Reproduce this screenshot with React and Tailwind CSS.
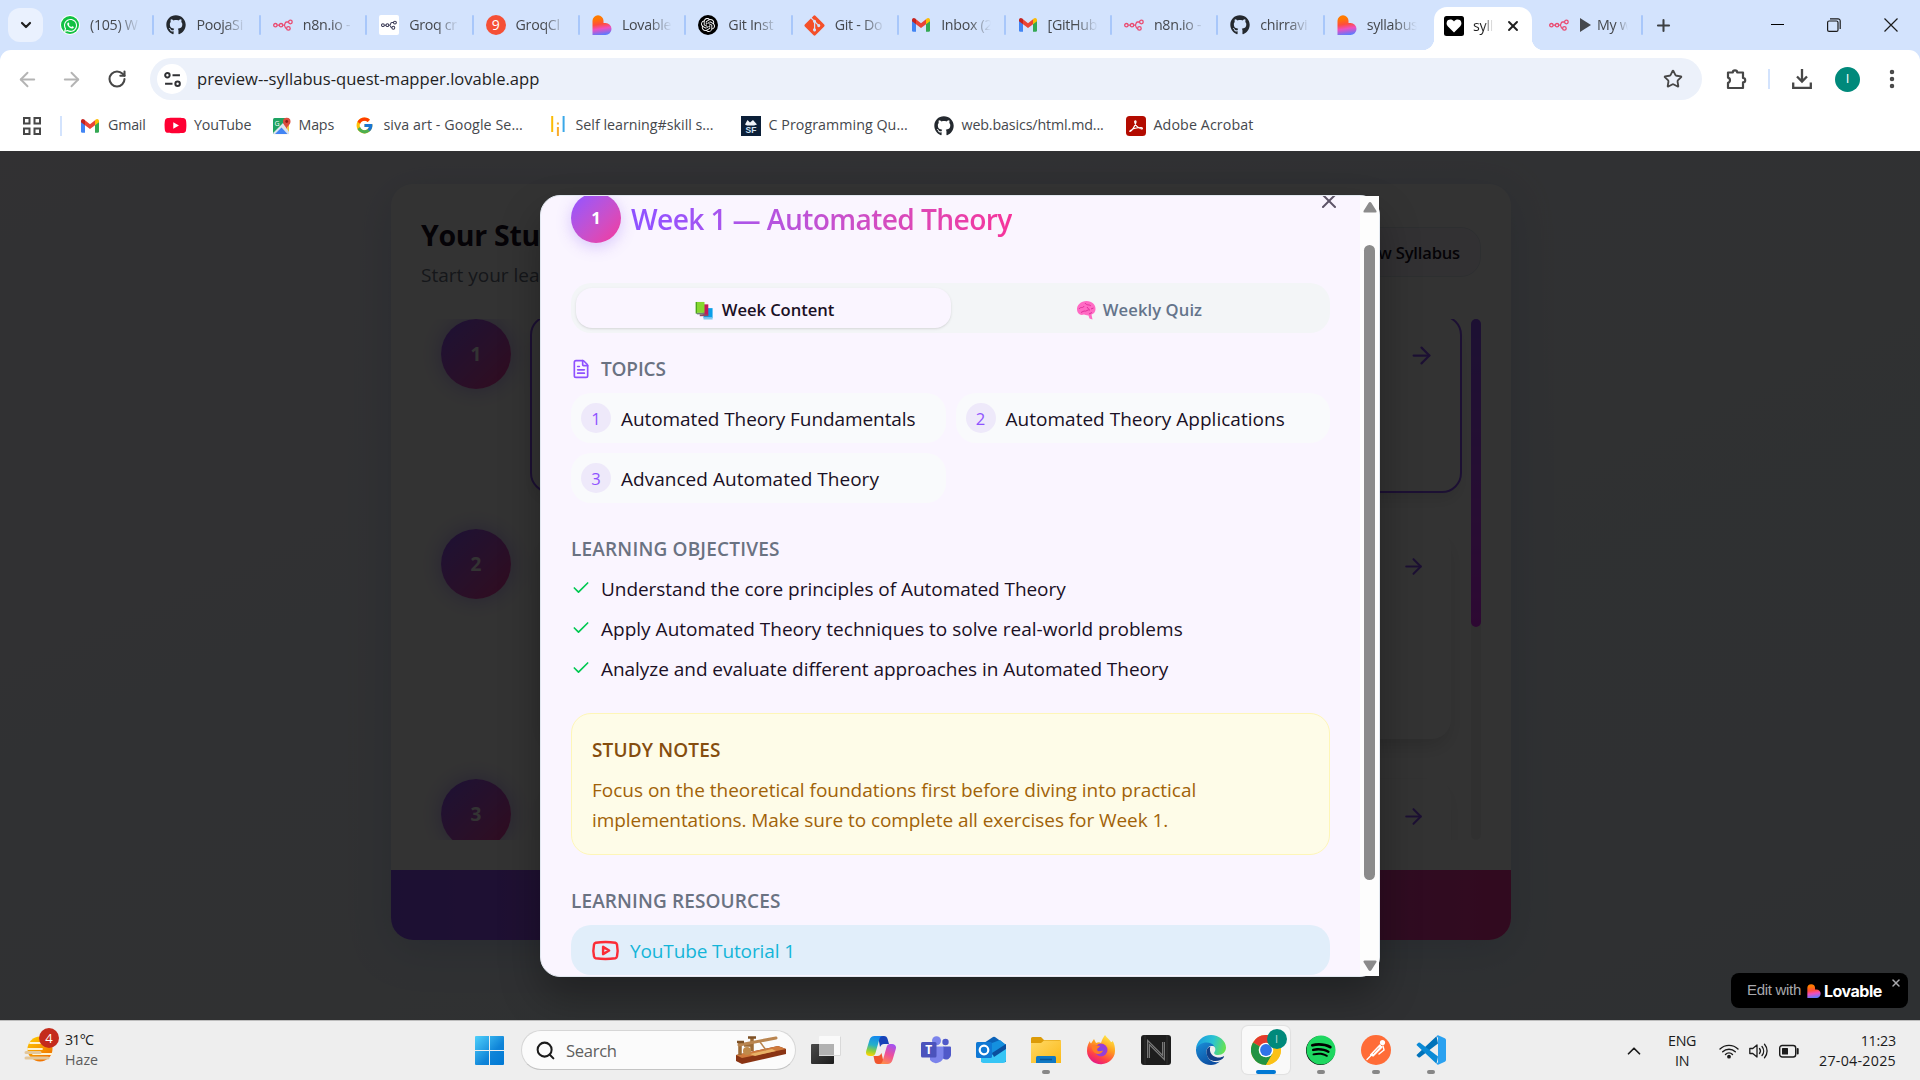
import {
  ArrowRight, ArrowLeft, Check, ChevronDown, ChevronUp, EllipsisVertical, FileText, Plus, RotateCw, Search, Star, X, Youtube,
} from "lucide-react";
import { FaGithub, FaWhatsapp, FaSpotify, FaGitAlt, FaYoutube } from "react-icons/fa";
import { FcGoogle } from "react-icons/fc";
import { SiOpenai } from "react-icons/si";

/* ---------- favicons ---------- */

const WhatsApp = () => (
  <span className="flex size-5 items-center justify-center rounded-full bg-white">
    <span className="flex size-[18px] items-center justify-center rounded-full bg-[#12c143]">
      <FaWhatsapp className="size-[15px] text-white" />
    </span>
  </span>
);

const N8n = ({ className = "size-5 text-[#ea4b71]" }) => (
  <svg viewBox="0 0 20 20" className={className} fill="none" stroke="currentColor" strokeWidth="1.3">
    <circle cx="2.4" cy="10.2" r="1.7" />
    <circle cx="8" cy="10.2" r="1.7" />
    <circle cx="17.4" cy="7" r="1.8" />
    <circle cx="15.4" cy="13.4" r="1.8" />
    <path d="M4.1 10.2h2.2M9.7 10.2h.8M15.6 7h-2c-2.6 0-.6 3.2-3 3.2 2.4 0 .4 3.2 3 3.2" />
  </svg>
);

const N8nDark = () => (
  <span className="flex size-5 items-center justify-center rounded-[2px] bg-white">
    <N8n className="size-4 text-[#3a3a55]" />
  </span>
);

const Nine = () => (
  <span className="flex size-5 items-center justify-center rounded-full bg-[#f55036] text-[14px] leading-none text-white">9</span>
);

const LovableMark = ({ size = "size-5" }) => (
  <svg viewBox="0 0 20 20" className={size}>
    <defs>
      <linearGradient id="lovable" x1="0.35" y1="0" x2="0.5" y2="1">
        <stop offset="0.15" stopColor="#ff7a00" />
        <stop offset="0.45" stopColor="#ff4d3d" />
        <stop offset="0.68" stopColor="#ee4fc0" />
        <stop offset="1" stopColor="#5a7bff" />
      </linearGradient>
    </defs>
    <path fill="url(#lovable)" d="M.5 5.8A5.500 5.500 0 0 1 11.500 5.800V8h2A6 6 0 0 1 13.500 20H.500Z" />
  </svg>
);

const OpenAi = () => (
  <span className="flex size-5 items-center justify-center rounded-full bg-black">
    <SiOpenai className="size-[14px] text-white" />
  </span>
);

const GmailMark = () => (
  <svg viewBox="0 0 20 20" className="size-5">
    <path fill="#4285f4" d="M1 5.500v10c0 .8.500 1.200 1.200 1.200H5V8.500z" />
    <path fill="#34a853" d="M19 5.500v10c0 .8-.500 1.200-1.200 1.200H15V8.500z" />
    <path fill="#ea4335" d="M5 4.300l5 3.900 5-3.900v5L10 13 5 9.300z" />
    <path fill="#c5221f" d="M1 5c0-1.900 2-2.600 3.300-1.400L5 4.200v5L1 6.200z" />
    <path fill="#fbbc04" d="M19 5c0-1.900-2-2.600-3.300-1.400l-.7.6v5l4-3z" />
  </svg>
);

const HeartMark = () => (
  <svg viewBox="0 0 20 20" className="size-5">
    <rect width="20" height="20" rx="2.500" fill="#000" />
    <path fill="#fff" d="M10 16.500 3.500 10A4 4 0 0 1 2.800 6C3.800 3 8 2.800 10 5.500 12 2.800 16.200 3 17.200 6a4 4 0 0 1-.7 4z" />
  </svg>
);

const MapsMark = () => (
  <svg viewBox="0 0 20 20" className="size-5">
    <rect x="1" y="2" width="16" height="16" rx="1.500" fill="#1ea362" />
    <path d="M1 17 11 7l6 6v4.500a.8.8 0 0 1-.8.800H2z" fill="#dde4ec" />
    <path d="M3 18 9.500 11.500 15.500 18z" fill="#4285f4" />
    <path d="M12 8l5 8V8z" fill="#f6c543" />
    <text x="2.500" y="9.500" fontSize="7" fill="#fff" fontFamily="Open Sans">G</text>
    <path d="M14.500 13c-.5-3-3.500-4-3.500-7.500a3.700 3.700 0 0 1 7.500 0C18.500 9 15 10 14.500 13z" fill="#dd4b3e" />
    <circle cx="14.700" cy="5.500" r="1.400" fill="#8c1d18" />
  </svg>
);

const BarsMark = () => (
  <svg viewBox="0 0 14 20" className="h-5 w-3.5">
    <path d="M1.200 0v16" stroke="#fbbc05" strokeWidth="2" />
    <path d="M6.900 11v9M6.900 6.500v2" stroke="#f9ab2d" strokeWidth="2" />
    <path d="M12.600 0v16" stroke="#3aa8e8" strokeWidth="2" />
  </svg>
);

const SfMark = () => (
  <svg viewBox="0 0 20 20" className="size-5">
    <rect width="20" height="20" fill="#0b1f38" />
    <path d="M4 8.500 6.500 4 9 6.500 12 4l4 4.500-3 1H6z" fill="#eef3f8" />
    <text x="10" y="17" textAnchor="middle" fontSize="8.500" fontWeight="700" fill="#cfe3f5" fontFamily="Liberation Sans">SF</text>
  </svg>
);

const AcrobatMark = () => (
  <svg viewBox="0 0 20 20" className="size-5">
    <rect width="20" height="20" rx="3.500" fill="#b30b00" />
    <path d="M4 15.500c2-1 5-5 6-9.500.2-1.500-1.500-1.800-1.300 0C9 9 12 12.500 15.500 13c1.500 0 1-1.500-.5-1.500-3 0-8 1.200-10.500 3-.8.700-.9 1-.5 1z" fill="none" stroke="#fff" strokeWidth="1.200" />
  </svg>
);

/* ---------- browser chrome ---------- */

const GitHubMark = () => <FaGithub className="size-5 text-[#24292f]" />;

const TABS = [
  [WhatsApp, "(105) W"],
  [GitHubMark, "PoojaSi"],
  [N8n, "n8n.io -"],
  [N8nDark, "Groq cr"],
  [Nine, "GroqCl"],
  [LovableMark, "Lovable"],
  [OpenAi, "Git Inst"],
  [() => <FaGitAlt className="-ml-0.5 size-[23px] text-[#f4502a]" />, "Git - Do"],
  [GmailMark, "Inbox (2"],
  [GmailMark, "[GitHub"],
  [N8n, "n8n.io -"],
  [GitHubMark, "chirravi"],
  [LovableMark, "syllabus"],
];

function TabStrip() {
  return (
    <div className="flex h-[50px] items-center bg-[#d3e3fd] text-[14.25px] tracking-[-0.3px] text-[#45484d]">
      <div className="ml-2 flex h-[34px] w-[35px] items-center justify-center rounded-xl bg-[#eaf1fe] text-[#1f1f1f]">
        <ChevronDown className="size-4" strokeWidth={3.200} />
      </div>
      <div className="ml-[5px] flex">
        {TABS.map(([Icon, label], i) => (
          <div key={i} className="flex h-5 w-[106.4px] items-center pl-3">
            <span className="flex w-[30px] shrink-0"><Icon /></span>
            <span className="w-[50px] whitespace-nowrap [mask-image:linear-gradient(to_right,#000_55%,transparent)]">{label}</span>
            {i < 12 && <span className="ml-auto h-5 w-[2px] rounded bg-[#a8c7fa]" />}
          </div>
        ))}
      </div>
      <div className="relative ml-[3px] mt-[7px] flex h-[43px] w-[98px] items-center rounded-t-[13px] bg-white pb-[5px] pl-[10px] text-[#1f1f1f]">
        <span className="absolute -left-3 bottom-0 size-3 bg-[radial-gradient(circle_at_0_0,#d3e3fd_12px,#fff_12.5px)]" />
        <span className="absolute -right-3 bottom-0 size-3 bg-[radial-gradient(circle_at_100%_0,#d3e3fd_12px,#fff_12.5px)]" />
        <HeartMark />
        <span className="ml-[9px] w-5 whitespace-nowrap [mask-image:linear-gradient(to_right,#000_55%,transparent)]">syll</span>
        <X className="ml-3 size-4" strokeWidth={2.800} />
      </div>
      <div className="flex h-5 items-center pl-[17px]">
        <N8n />
        <svg viewBox="0 0 11 14" className="ml-[11px] h-3.5 w-[11px]" fill="#45484d"><path d="M0 0 11 7 0 14z" /></svg>
        <span className="ml-1.5 w-[31px] whitespace-nowrap [mask-image:linear-gradient(to_right,#000_60%,transparent)]">My w</span>
        <span className="ml-[13px] h-5 w-[2px] rounded bg-[#a8c7fa]" />
        <Plus className="ml-[11px] size-[19px] text-[#3c3f43]" strokeWidth={2.600} />
      </div>
      <div className="ml-auto flex items-center gap-[43px] pr-[22px] text-[#1b1b1b]">
        <span className="mb-0.5 h-px w-[13px] bg-black" />
        <svg viewBox="0 0 14 14" className="size-3.5" fill="none" stroke="currentColor" strokeWidth="1.200">
          <rect x=".6" y="3" width="10.400" height="10.400" rx="1.500" />
          <path d="M3 .8h8a2.200 2.200 0 0 1 2.200 2.200v8" />
        </svg>
        <svg viewBox="0 0 14 14" className="size-3.5" stroke="currentColor" strokeWidth="1.200"><path d="M.5.5l13 13M13.500.5l-13 13" /></svg>
      </div>
    </div>
  );
}

function Toolbar() {
  return (
    <div className="flex h-[50px] items-center pt-2 text-[#474747]">
      <ArrowLeft className="ml-[16px] size-[23px] text-[#b4b4b4]" strokeWidth={2} />
      <ArrowRight className="ml-[21px] size-[23px] text-[#b4b4b4]" strokeWidth={2} />
      <RotateCw className="ml-[24px] size-[20px]" strokeWidth={2.500} />
      <div className="ml-[23px] flex h-[42px] w-[1552px] items-center rounded-full bg-[#ecf1fa] pl-[7px] pr-[19px]">
        <span className="flex size-[30px] items-center justify-center rounded-full bg-white">
          <svg viewBox="0 0 16 16" className="size-[17px]" fill="none" stroke="#303134" strokeWidth="1.900">
            <circle cx="3.200" cy="4" r="2.100" />
            <path d="M8 4h7M1 12h7" />
            <circle cx="12.800" cy="12" r="2.100" />
          </svg>
        </span>
        <span className="ml-[10px] pt-px text-[16.600px] text-[#1f1f1f]">preview--syllabus-quest-mapper.lovable.app</span>
        <Star className="ml-auto size-5" strokeWidth={2.200} strokeLinejoin="miter" />
      </div>
      <svg viewBox="0 0 24 24" className="ml-[22px] size-6" fill="none" stroke="currentColor" strokeWidth="2.200" strokeLinejoin="round">
        <path d="M4 5.500h4.800a2.200 2.200 0 0 1 4.400 0H19v5.500a2.200 2.200 0 0 1 0 4.400V21H4v-5.200a2.700 2.700 0 0 0 0-5.200z" />
      </svg>
      <span className="ml-[20px] h-5 w-[2px] bg-[#d3e3fd]" />
      <svg viewBox="0 0 20 20" className="ml-[22px] size-5" fill="none" stroke="currentColor" strokeWidth="2.300">
        <path d="M10 0v12M5 7.500l5 5 5-5M1.200 13.500v5.300h17.600v-5.300" />
      </svg>
      <span className="ml-[23px] flex size-[25px] items-center justify-center rounded-full bg-[#00897b] text-[13px] text-white">I</span>
      <EllipsisVertical className="ml-[20px] size-6" strokeWidth={2.500} />
    </div>
  );
}

const BOOKMARKS = [
  [GmailMark, "Gmail", "w-[86px] tracking-[-0.2px]", "w-7"],
  [() => <FaYoutube className="-ml-0.5 size-[23px] text-[#ff0033]" />, "YouTube", "w-[105.500px] tracking-[-0.2px]", "w-7"],
  [MapsMark, "Maps", "w-[85px] tracking-[-0.18px]", "w-[27px]"],
  [() => <FcGoogle className="-ml-0.5 size-[19px]" />, "siva art - Google Se...", "w-[194px] tracking-[0.08px]", "w-[27px]"],
  [BarsMark, "Self learning#skill s...", "w-[190px]", "w-[25px]"],
  [SfMark, "C Programming Qu...", "w-[193px] tracking-[0.05px]", "w-7"],
  [GitHubMark, "web.basics/html.md...", "w-[192px] tracking-[-0.13px]", "w-7"],
  [AcrobatMark, "Adobe Acrobat", "w-[130px] tracking-[0.1px]", "w-7"],
];

function Bookmarks() {
  return (
    <div className="flex h-[51px] items-center text-[14.25px] text-[#45484d]">
      <svg viewBox="0 0 18 18" className="ml-[23px] size-[18px]" fill="none" stroke="#474747" strokeWidth="2">
        <path d="M1 1h5.500v5.500H1zM11.500 1H17v5.500h-5.500zM1 11.500h5.500V17H1zM11.500 11.500H17V17h-5.500z" />
      </svg>
      <span className="ml-[19px] h-5 w-[2px] bg-[#d3e3fd]" />
      <div className="ml-[18px] flex">
        {BOOKMARKS.map(([Icon, label, cls, iw]) => (
          <div key={label} className={"flex items-center whitespace-nowrap " + cls}>
            <span className={"flex shrink-0 " + iw}><Icon /></span>
            <span className="pb-0.5">{label}</span>
          </div>
        ))}
      </div>
    </div>
  );
}

/* ---------- page under the dialog ---------- */

const Step = ({ n }) => (
  <span className="flex size-[70px] shrink-0 items-center justify-center rounded-full bg-gradient-to-br from-violet-500 to-pink-500 text-[19px] font-bold text-white shadow-[0_0_22px_rgba(139,92,246,0.5)]">
    {n}
  </span>
);

function StudyPlan() {
  return (
    <section className="mt-[33px] ml-[391px] flex h-[756px] w-[1120px] flex-col overflow-hidden rounded-[22px] bg-white shadow-[0_10px_40px_rgba(100,140,200,0.25)]">
      <header className="flex h-[135px] justify-between px-[30px]">
        <div className="pt-[30px]">
          <h1 className="text-[28.500px] leading-[42px] font-bold tracking-[-0.3px] text-[#1a1025]">Your Study</h1>
          <p className="mt-[4px] text-[19px] leading-[30px] text-gray-500">Start your learning</p>
        </div>
        <div className="mt-[43px] flex h-[50px] items-center rounded-[20px] border border-[#e2e8f0] bg-[#f8f6ff] px-5 pt-0.5 text-[16.600px] font-semibold tracking-[-0.2px] text-[#1a1025]">
          New Syllabus
        </div>
      </header>
      <div className="mx-[30px] flex h-[521px] justify-between overflow-hidden">
        <div className="w-[1042px] pl-5">
          <div className="flex h-[210px] gap-[19px]">
            <Step n={1} />
            <div className="-mt-1 flex h-[178px] w-[932px] shrink-0 justify-end rounded-[20px] border-[2.500px] border-violet-500 bg-white pt-[25px] pr-[25px] shadow-[0_10px_15px_-3px_rgba(0,0,0,0.1)]">
              <ArrowRight className="size-[27px] text-violet-500" />
            </div>
          </div>
          <div className="flex h-[250px] gap-[30px]">
            <Step n={2} />
            <div className="flex h-[210px] w-[910px] justify-end rounded-[20px] bg-white pt-[25px] pr-[25px] shadow-[0_10px_20px_-3px_rgba(0,0,0,0.15)]">
              <ArrowRight className="size-[25px] text-violet-500" />
            </div>
          </div>
          <div className="flex h-[250px] gap-[30px]">
            <Step n={3} />
            <div className="flex h-[210px] w-[910px] justify-end rounded-[20px] bg-white pt-[25px] pr-[25px] shadow-[0_6px_20px_-3px_rgba(0,0,0,0.1)]">
              <ArrowRight className="size-[25px] text-violet-500" />
            </div>
          </div>
        </div>
        <div className="w-[10px] rounded-full bg-[#f1f1f1]">
          <div className="h-[308px] rounded-full bg-gradient-to-b from-violet-500 to-fuchsia-500" />
        </div>
      </div>
      <div className="mt-auto h-[70px] bg-gradient-to-r from-violet-500 to-pink-500" />
    </section>
  );
}

/* ---------- dialog ---------- */

const Books = () => (
  <svg viewBox="0 0 20 20" className="size-[19px]">
    <path d="M9 7.500h9.500V18H9z" fill="#0a9fe8" />
    <path d="M9 17h9.500v2.500H9z" fill="#7ec8f0" />
    <path d="M8 3.500h6V15H8z" fill="#c2185b" />
    <path d="M5 14h9v2H5z" fill="#8f4b63" />
    <path d="M.8 1H10v11.500H.8z" fill="#86d72f" />
    <path d="M.8 1H2v12.500H.8z" fill="#43a01e" />
    <path d="M2 12.500h8v1.600H2z" fill="#6e7f76" />
  </svg>
);

const Brain = () => (
  <svg viewBox="0 0 20 20" className="size-[20px]">
    <path d="M1 10C.5 5 5 1 10.500 1S20 5 19.500 9.500C19 13 17 14 15.500 14.500L16.500 19.500 13.500 18.500 12.500 15.500C10 15.500 9 14.500 8 14.500 4 16 1.500 13.500 1 10z" fill="#ff6bc4" />
    <path d="M3 9c2-3 4 0 5-3M9 3c2 3 4 1 6 3M8 11c3 1 3-2 6-1M5 12.500l3-1.500M15 9l2.500-1M11 7l2 2.500M13 14l3-1.500" fill="none" stroke="#e0319c" strokeWidth="1" />
  </svg>
);

const TOPICS = [
  ["Automated Theory Fundamentals", "tracking-[-0.08px]"],
  ["Automated Theory Applications", "tracking-[0.02px]"],
  ["Advanced Automated Theory", "tracking-[0.03px]"],
];
const OBJECTIVES = [
  ["Understand the core principles of Automated Theory", "tracking-[-0.05px]"],
  ["Apply Automated Theory techniques to solve real-world problems", "tracking-[0.015px]"],
  ["Analyze and evaluate different approaches in Automated Theory", "tracking-[-0.038px]"],
];

function WeekDialog() {
  return (
    <div role="dialog" className="relative flex h-[782px] w-[840px] rounded-[20px] border border-[#e2e8f0] bg-[#faf5ff] shadow-[0_20px_40px_rgba(0,0,0,0.3)]">
      <div className="relative h-[780px] w-[819px] overflow-hidden rounded-l-[19px] pl-[30px] text-[19px] leading-[30px]">
        <X className="absolute top-[-7px] left-[776px] size-[24px] text-[#5d5468]" strokeWidth={2} />
        <div className="w-[759px]">
          <div className="-mt-[3px] flex h-[50px] items-center">
            <span className="flex size-[50px] items-center justify-center rounded-full bg-gradient-to-br from-violet-500 to-pink-500 text-[16.600px] font-bold text-white shadow-[0_4px_15px_rgba(139,92,246,0.3)]">1</span>
            <h2 className="ml-[10px] bg-gradient-to-r from-violet-500 to-pink-500 bg-clip-text pt-0.5 text-[28.200px] leading-[42px] font-semibold tracking-[-0.630px] text-transparent">
              Week 1 — Automated Theory
            </h2>
          </div>

          <div className="mt-10 flex h-[50px] rounded-[20px] bg-[#f3f5f7] p-[5px] text-[16.600px] font-semibold">
            <div className="flex h-10 w-[375px] items-center justify-center gap-2 rounded-[16px] bg-[#faf5ff] pt-1 pl-0.5 tracking-[-0.06px] text-[#1a1025] shadow-sm">
              <Books />Week Content
            </div>
            <div className="flex h-10 w-[374px] items-center justify-center gap-[7px] pt-1 pl-0.5 tracking-[0.09px] text-[#64748b]">
              <Brain />Weekly Quiz
            </div>
          </div>

          <h3 className="mt-[21px] flex h-[30px] items-center gap-[10px] font-semibold tracking-[-0.16px] text-gray-500">
            <FileText className="-mt-px size-5 text-violet-500" />TOPICS
          </h3>
          <div className="mt-[9px] grid grid-cols-2 gap-[10px] text-[#1a1025]">
            {TOPICS.map(([t, cls], i) => (
              <div key={t} className="flex h-[50px] items-center gap-[10px] rounded-[20px] bg-[#f9fafc] px-[10px]">
                <span className="flex size-[30px] items-center justify-center rounded-full bg-[#eee9fa] pt-0.5 text-[16.600px] text-violet-500">{i + 1}</span>
                <span className={"pt-0.5 " + cls}>{t}</span>
              </div>
            ))}
          </div>

          <h3 className="mt-[31px] font-semibold tracking-[0.18px] text-gray-500">LEARNING OBJECTIVES</h3>
          <ul className="mt-[10px] flex flex-col gap-[10px] text-[#1a1025]">
            {OBJECTIVES.map(([t, cls]) => (
              <li key={t} className="flex gap-[10px] whitespace-nowrap">
                <Check className="mt-[4px] size-5 text-green-500" />
                <span className={cls}>{t}</span>
              </li>
            ))}
          </ul>

          <div className="mt-[29px] h-[142px] rounded-[20px] border border-[#fef6b8] bg-[#fefce8] px-5 pt-[21px] text-[#a16207]">
            <h3 className="font-semibold tracking-[0.14px] text-[#854d0e]">STUDY NOTES</h3>
            <p className="mt-[10px] whitespace-nowrap">
              <span className="tracking-[-0.016px]">Focus on the theoretical foundations first before diving into practical</span><br />
              <span className="tracking-[-0.064px]">implementations. Make sure to complete all exercises for Week 1.</span>
            </p>
          </div>

          <h3 className="mt-[31px] font-semibold tracking-[0.12px] text-gray-500">LEARNING RESOURCES</h3>
          <div className="mt-[9px] flex h-[50px] items-center gap-[10px] rounded-[20px] bg-[#e1eefa] px-5 tracking-[-0.12px] text-[#14b5d8]">
            <Youtube className="size-[29px] text-red-500" />
            <span className="pt-0.5">YouTube Tutorial 1</span>
          </div>
        </div>
      </div>
      <div className="flex h-[780px] w-[19px] flex-col items-center bg-[#fdfdfd]">
        <svg viewBox="0 0 14 11" className="mt-1.5 h-[11px] w-3.5" fill="#8b8b8b"><path d="M7 0q.8 0 1.300.8L13.500 9q.5 1.500-1 1.500h-11Q0 10.500.5 9L5.700.8Q6.200 0 7 0z" /></svg>
        <div className="mt-8 h-[635px] w-[11px] rounded-full bg-[#8b8b8b]" />
        <svg viewBox="0 0 14 11" className="mt-auto mb-[5px] h-[11px] w-3.5 rotate-180" fill="#8b8b8b"><path d="M7 0q.8 0 1.300.8L13.500 9q.5 1.500-1 1.500h-11Q0 10.500.5 9L5.700.8Q6.200 0 7 0z" /></svg>
      </div>
    </div>
  );
}

/* ---------- taskbar ---------- */

const Haze = () => (
  <svg viewBox="0 0 30 30" className="size-[30px]">
    <defs><linearGradient id="sun" x1="0" y1="0" x2="0.6" y2="1"><stop offset="0" stopColor="#ffd000" /><stop offset="1" stopColor="#f07000" /></linearGradient></defs>
    <circle cx="16" cy="14" r="12.500" fill="url(#sun)" />
    <path d="M6 8h10M4 14h14M9 19h19" stroke="#fff3d0" strokeWidth="1.800" strokeLinecap="round" />
    <path d="M2 17.500h14M2 23h22" stroke="#e3c79b" strokeWidth="3" strokeLinecap="round" />
  </svg>
);

const Windows = () => (
  <svg viewBox="0 0 29 29" className="size-[29px]">
    <defs><linearGradient id="win" x1="0" y1="0" x2="1" y2="1"><stop stopColor="#4fd0fb" /><stop offset="0.600" stopColor="#0f84d8" /><stop offset="1" stopColor="#0078d4" /></linearGradient></defs>
    <path fill="url(#win)" d="M1 0h13v14H0V1a1 1 0 0 1 1-1zM15 0h13a1 1 0 0 1 1 1v13H15zM0 15h14v14H1a1 1 0 0 1-1-1zM15 15h14v13a1 1 0 0 1-1 1H15z" />
  </svg>
);

const Telegraph = () => (
  <svg viewBox="0 0 50 28" className="h-7 w-[50px]">
    <path d="M0 19 42 10l8 3v5L6 28 0 25z" fill="#8a3413" />
    <path d="M0 19 42 10l8 3L6 22z" fill="#cf7a3c" />
    <path d="M14 18l22-5 4 2-21 5z" fill="#e8b266" />
    <path d="M4 7v12M16 2v13M8 9h7" stroke="#9c6a35" strokeWidth="3.500" />
    <path d="M3 9 40 2" stroke="#b98550" strokeWidth="3" strokeLinecap="round" />
    <path d="M24 6l6 8" stroke="#b98550" strokeWidth="1.500" />
    <circle cx="11" cy="15" r="4" fill="#c08a4a" />
    <path d="M1 6h7M12 1.500h8" stroke="#7d5025" strokeWidth="2.500" />
  </svg>
);

const TaskView = () => (
  <svg viewBox="0 0 30 30" className="size-[30px]">
    <defs><linearGradient id="tv" x1="0" y1="0" x2="1" y2="1"><stop stopColor="#4a4a4a" /><stop offset="1" stopColor="#1c1c1c" /></linearGradient></defs>
    <rect x="0" y="9" width="23" height="20" rx="1" fill="url(#tv)" />
    <rect x="8" y="1" width="22" height="20" rx="1" fill="#fafafa" />
    <path d="M8 9h15v12H8z" fill="#b2b2b2" />
    <path d="M29.500 1.500v19H8" fill="none" stroke="#d9d9d9" />
  </svg>
);

const Copilot = () => (
  <svg viewBox="0 0 30 28" className="h-7 w-[30px]">
    <defs>
      <linearGradient id="cpa" x1="0.500" y1="0" x2="0.300" y2="1"><stop stopColor="#1389ef" /><stop offset="0.450" stopColor="#25b0c8" /><stop offset="0.750" stopColor="#8fcf3a" /><stop offset="1" stopColor="#ffd400" /></linearGradient>
      <linearGradient id="cpb" x1="0.700" y1="0" x2="0.300" y2="1"><stop stopColor="#a452f0" /><stop offset="0.500" stopColor="#ee4f9a" /><stop offset="1" stopColor="#ff8d4a" /></linearGradient>
    </defs>
    <path d="M12 0h6c2 0 3 1 3.600 3L23 8h-5c-2 0-3 1-4 3z" fill="#1743b8" />
    <path d="M18 28h-6c-2 0-3-1-3.500-3L7.500 20h4c2 0 3-1 4-3z" fill="#f0552d" />
    <path d="M8.500 0H17c-2 0-3 1-3.600 3L9.500 17c-.6 2-1.600 3-3.500 3H4c-3 0-4.600-2-3.800-5L3.500 4C4.300 1.500 6 0 8.500 0z" fill="url(#cpa)" />
    <path d="M21.500 28H13c2 0 3-1 3.600-3l4-14c.6-2 1.500-3 3.400-3h2c3 0 4.600 2 3.800 5L26.500 24c-.8 2.500-2.500 4-5 4z" fill="url(#cpb)" />
  </svg>
);

const Teams = () => (
  <svg viewBox="0 0 30 28" className="h-7 w-[30px]">
    <circle cx="24.500" cy="6" r="3.200" fill="#5059c9" />
    <circle cx="15.500" cy="4.700" r="4.500" fill="#7b83eb" />
    <path d="M22 10.500h7a1 1 0 0 1 1 1V18a5 5 0 0 1-8 4.500z" fill="#5059c9" />
    <path d="M9 10.500h13.500V19a7.500 7.500 0 0 1-13.500 5z" fill="#7b83eb" />
    <rect y="6" width="15.500" height="15.500" rx="1.500" fill="#4b53bc" />
    <text x="7.700" y="18" textAnchor="middle" fontSize="12" fontWeight="700" fill="#fff" fontFamily="Open Sans">T</text>
  </svg>
);

const Outlook = () => (
  <svg viewBox="0 0 30 28" className="h-7 w-[30px]">
    <path d="M5 9 17 1q1-.7 2 0l11 8v17H5z" fill="#0b62b8" />
    <path d="M8 10 24 4l6 5-14 10z" fill="#1490df" />
    <path d="M5 26V14l12 5 13-8v13a3 3 0 0 1-3 3H7z" fill="#36c5f5" />
    <path d="M16 17 30 8v5l-12 8z" fill="#0a4f9e" />
    <rect y="6" width="16" height="16" rx="1.500" fill="#0f78d4" />
    <circle cx="8" cy="14" r="4.300" fill="none" stroke="#fff" strokeWidth="2.200" />
  </svg>
);

const Explorer = () => (
  <svg viewBox="0 0 30 27" className="h-[27px] w-[30px]">
    <defs><linearGradient id="fold" x1="0" y1="0" x2="1" y2="1"><stop stopColor="#ffd966" /><stop offset="1" stopColor="#fbb917" /></linearGradient></defs>
    <path d="M0 1.500Q0 0 1.500 0H10l3 3h15.500Q30 3 30 4.500V10H0z" fill="#dc9b08" />
    <path d="M0 6h10l3-2.500h17V26H0z" fill="url(#fold)" />
    <path d="M5 26v-5.500Q5 19 6.500 19h17q1.500 0 1.500 1.500V26z" fill="#0f78c4" />
    <path d="M9 22.500h12" stroke="#0a5595" strokeWidth="1.500" />
  </svg>
);

const Firefox = () => (
  <svg viewBox="0 0 28 30" className="h-[30px] w-7">
    <defs>
      <linearGradient id="ff" x1="0.800" y1="0" x2="0.300" y2="1"><stop stopColor="#fff04a" /><stop offset="0.400" stopColor="#ffa01e" /><stop offset="0.750" stopColor="#ff4048" /><stop offset="1" stopColor="#e3158a" /></linearGradient>
      <radialGradient id="ffp"><stop stopColor="#7b49e8" /><stop offset="1" stopColor="#a33ad0" /></radialGradient>
    </defs>
    <path d="M18 0c2 3 4 4 6 7 1 0 1.500-.5 1.500-1.500C27.500 9 28 12 28 15.500A14 13.500 0 0 1 0 16C0 11 1.500 8 3 6c0 1.500.5 2 1 2.500L7 4l2 4c2-1 4-1 5 0 1-3 2-5.500 4-8z" fill="url(#ff)" />
    <circle cx="14" cy="15" r="6.500" fill="url(#ffp)" />
    <path d="M5 10c4-1 5 1 8 1-1 2-3 2-3 4 1 2 4 1 6 .5-1 3-5 4.500-8 2.500s-3.500-5-3-8z" fill="#ff7d24" />
  </svg>
);

const Notion = () => (
  <svg viewBox="0 0 30 30" className="size-[30px]">
    <rect width="30" height="30" rx="3" fill="#1d1d1d" />
    <path d="M4 0v30M26 0v30" stroke="#303030" />
    <path d="M7.500 23V7.500L22.500 22.500V7" fill="none" stroke="#777" strokeWidth="3" />
    <path d="M7.500 23V7.500L22.500 22.500V7" fill="none" stroke="#3d3d3d" strokeWidth="1" />
  </svg>
);

const Edge = () => (
  <svg viewBox="0 0 30 30" className="size-[30px]">
    <defs>
      <linearGradient id="eda" x1="0" y1="0.300" x2="1" y2="0.500"><stop stopColor="#1a9be0" /><stop offset="0.550" stopColor="#2bc3d2" /><stop offset="1" stopColor="#67e350" /></linearGradient>
      <linearGradient id="edb" x1="0" y1="0" x2="0.600" y2="1"><stop stopColor="#1b8fd8" /><stop offset="1" stopColor="#0c4da0" /></linearGradient>
    </defs>
    <path d="M0 14C.5 6 7 0 15 0s15 6 15 12.500c0 4.500-3.500 7.500-8 7.500-3.500 0-4.500-1.500-3.500-3 2.500-3.500-.5-7.500-5.500-7.500C7 9.500 2 11 0 14z" fill="url(#eda)" />
    <path d="M0 14c2-4 6-6.500 10.500-6.500 3.500 0 6.500 1.500 8 4-4-1.500-8 .5-8 5C10.500 25 18 29 24 26.500 21 29 18 30 15 30 7 30-.5 23 0 14z" fill="url(#edb)" />
    <path d="M10.500 16.500c0-2.500 1.500-4.500 4-5-1.500 3-.5 10 7 11 3 .3 5-.8 6-1.300.6-.2.800.3.500.8C25 27.500 10.500 29 10.500 16.500z" fill="#123f86" />
  </svg>
);

const Chrome = () => (
  <svg viewBox="0 0 30 30" className="size-[30px]">
    <circle cx="15" cy="15" r="15" fill="#fbc116" />
    <path d="M15 15 2 7.500A15 15 0 0 1 28 7.500z" fill="#e33b2e" />
    <path d="M15 15 2 7.500A15 15 0 0 0 15 30l7-12z" fill="#229342" />
    <path d="M15 8h13.200A15 15 0 0 1 15 30l6.500-11z" fill="#fbc116" />
    <circle cx="15" cy="15" r="7.300" fill="#fff" />
    <circle cx="15" cy="15" r="5.900" fill="#2f74e8" />
  </svg>
);

const Postman = () => (
  <svg viewBox="0 0 30 30" className="size-[30px]">
    <circle cx="15" cy="15" r="15" fill="#ff6c37" />
    <circle cx="21.500" cy="7.500" r="2.600" fill="#fff" />
    <path d="M19 10.500 10 20M20.500 12 12 20.500" stroke="#fff" strokeWidth="2.200" strokeLinecap="round" />
    <path d="M11 19.500 6 24.500M22 11l1 4-5 4" fill="none" stroke="#fff" strokeWidth="1.400" strokeLinecap="round" />
    <path d="M18 12.500l-6 6.500" stroke="#ff6c37" strokeWidth=".7" />
  </svg>
);

const VsCode = () => (
  <svg viewBox="0 0 30 30" className="size-[30px]">
    <path d="M1 19.500 20.500 1.200 22 8.500 4 22.300q-.8.600-1.600 0L.8 20.800q-.6-.7.200-1.300z" fill="#0072b9" />
    <path d="M1 10.500 20.500 28.800 22 21.500 4 7.700q-.8-.6-1.600 0L.8 9.200q-.6.700.2 1.300z" fill="#0a8ad6" />
    <path d="M20.500 1.200Q21.300 0 22.700.4L28.800 3.200Q30 3.800 30 5v20q0 1.200-1.200 1.800l-6.100 2.800q-1.400.4-2.200-.8l1.500-1.500V2.700z" fill="#2aa1f0" />
  </svg>
);

const Spotify = () => (
  <span className="flex size-[29px] items-center justify-center rounded-full bg-black">
    <FaSpotify className="size-[30px] shrink-0 text-[#1ed760]" />
  </span>
);

const APPS = [
  [TaskView], [Copilot], [Teams], [Outlook], [Explorer, 1], [Firefox], [Notion], [Edge], [Chrome, 2], [Spotify, 1], [Postman, 1], [VsCode, 1],
];

function Taskbar() {
  return (
    <footer className="flex h-[60px] border-t border-[#bdbdbd] bg-[#eeeeee] text-[14.25px] leading-5 text-[#1b1b1b]">
      <div className="relative mt-[14px] ml-[24px] flex h-[42px] w-[140px]">
        <Haze />
        <span className="absolute -top-[7px] left-[15px] flex size-5 items-center justify-center rounded-full bg-[#c42b1c] text-[13px] text-white">4</span>
        <div className="-mt-[5px] ml-[11px]">
          <div className="tracking-[-0.8px]">31°C</div>
          <div className="text-[#5c5c5c]">Haze</div>
        </div>
      </div>
      <div className="mt-[15px] ml-[311px]"><Windows /></div>
      <div className="mt-[9px] ml-[17px] flex h-10 w-[275px] items-center rounded-full border border-[#d6d6d6] border-b-[#c4c4c4] bg-[#fbfbfb] pl-[13px] pr-[9px]">
        <Search className="size-[21px]" strokeWidth={2.300} />
        <span className="ml-[10px] pt-0.5 text-[16.600px] tracking-[-0.3px] text-[#5f5f5f]">Search</span>
        <span className="ml-auto"><Telegraph /></span>
      </div>
      <div className="ml-[2px] flex">
        {APPS.map(([Icon, state], i) => (
          <div key={i} className="flex w-[55px] justify-center pt-[5px]">
            <div className={"relative flex h-12 w-12 flex-col items-center rounded-md " + (state === 2 ? "bg-[#f9f9f9] shadow-[0_0_1px_1px_rgba(0,0,0,0.06)]" : "")}>
              <span className="mt-[9px] flex h-[30px] items-center"><Icon /></span>
              {state === 2 && <span className="absolute top-[3px] right-[3px] flex size-5 items-center justify-center rounded-full bg-[#00897b] text-[11px] text-[#b8dcd8]">I</span>}
              <span className="mt-[5px] flex">
                {state === 1 && <span className="h-1 w-2 rounded-full bg-[#868686]" />}
                {state === 2 && <span className="h-1 w-5 rounded-full bg-[#0078d4]" />}
              </span>
            </div>
          </div>
        ))}
      </div>
      <div className="ml-auto flex h-[59px] items-center pr-6">
        <ChevronUp className="size-[22px]" strokeWidth={1.900} />
        <div className="ml-[23px] w-[28px] text-center tracking-[-0.3px]">ENG<br />IN</div>
        <svg viewBox="0 0 20 16" className="ml-[23px] h-4 w-5" fill="none" stroke="currentColor" strokeWidth="1.400" strokeLinecap="round">
          <path d="M1 6a13 13 0 0 1 18 0" /><path d="M3.700 8.800a9 9 0 0 1 12.600 0" /><path d="M6.500 11.400a5 5 0 0 1 7 0" />
          <circle cx="10" cy="13.700" r="1.200" fill="currentColor" />
        </svg>
        <svg viewBox="0 0 20 16" className="ml-[10px] h-4 w-5" fill="none" stroke="currentColor" strokeWidth="1.300" strokeLinecap="round" strokeLinejoin="round">
          <path d="M.8 5.500h3L8 2v12l-4.200-3.500h-3z" /><path d="M10.500 5.500a4 4 0 0 1 0 5M13 3.500a7 7 0 0 1 0 9M15.500 1.300a10 10 0 0 1 0 13.400" />
        </svg>
        <svg viewBox="0 0 20 14" className="ml-[10px] h-3.5 w-5" fill="none" stroke="currentColor" strokeWidth="1.400">
          <rect x=".7" y="1.500" width="16" height="11.500" rx="2.500" /><rect x="3" y="4" width="6" height="6.500" rx=".5" fill="currentColor" stroke="none" /><path d="M18.700 5v4.500" strokeWidth="2" strokeLinecap="round" />
        </svg>
        <div className="ml-[20px] text-right"><div className="tracking-[-0.2px]">11:23</div><div className="tracking-[0.26px]">27-04-2025</div></div>
      </div>
    </footer>
  );
}

export default function App() {
  return (
    <div className="flex h-[1080px] w-[1920px] flex-col overflow-hidden bg-white font-['Open_Sans','Noto_Sans',sans-serif] whitespace-nowrap">
      <TabStrip />
      <div className="bg-[#d3e3fd]">
        <div className="h-[101px] rounded-t-[11px] bg-white">
          <Toolbar />
          <Bookmarks />
        </div>
      </div>
      <main className="relative h-[869px] overflow-hidden bg-gradient-to-br from-[#f7f5ff] to-[#e6f0f8]">
        <StudyPlan />
        <div className="absolute inset-0 bg-black/80 pt-11 pl-[540px]">
          <WeekDialog />
        </div>
        <div className="absolute right-3 bottom-3 flex h-[35px] w-[177px] items-center rounded-lg bg-black pl-[16px] text-white">
          <span className="font-['Liberation_Sans',sans-serif] text-[15px] tracking-[-0.3px] text-[#a8a8ac]">Edit with</span>
          <span className="ml-1.5"><LovableMark size="size-[14px]" /></span>
          <span className="ml-[3px] font-['Inter',sans-serif] text-[16px] font-bold tracking-[-0.5px]">Lovable</span>
          <X className="absolute top-1 right-[6px] size-3 text-[#a8a8ac]" strokeWidth={3} />
        </div>
      </main>
      <Taskbar />
    </div>
  );
}
